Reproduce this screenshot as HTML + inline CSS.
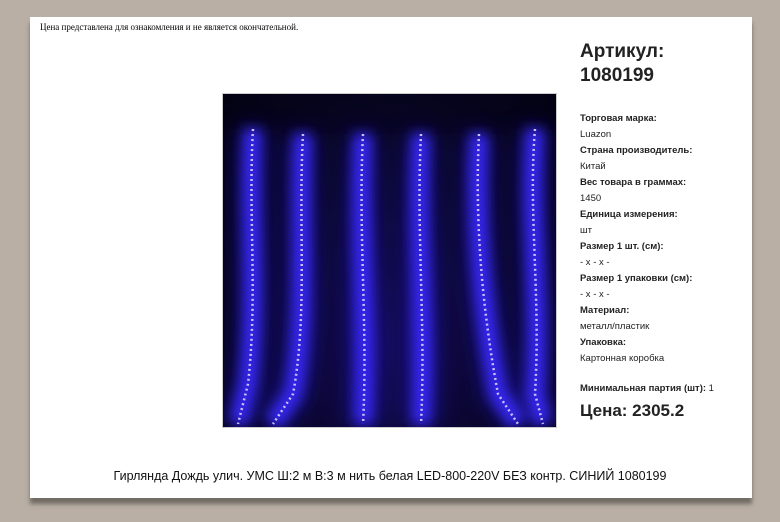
<!DOCTYPE html>
<html><head><meta charset="utf-8"><style>
body{margin:0;width:780px;height:522px;background:#b9afa5;position:relative;overflow:hidden;font-family:"Liberation Sans",Arial,sans-serif;}
.card{position:absolute;left:30px;top:17px;width:722px;height:481px;background:#fff;box-shadow:0 6px 4px rgba(90,85,80,.75);}
.note{position:absolute;left:40px;top:22px;font:9px "Liberation Serif",serif;color:#000;}
.art{position:absolute;left:580px;top:40px;font-size:19px;font-weight:bold;color:#222;line-height:24px;}
.info{position:absolute;left:580px;top:111px;font-size:9.5px;color:#222;line-height:16px;}
.info b{font-weight:bold;}
.min{position:absolute;left:580px;top:383px;font-size:9.5px;color:#222;}
.price{position:absolute;left:580px;top:401px;font-size:17px;font-weight:bold;color:#222;}
.title{position:absolute;left:0;width:780px;top:469px;text-align:center;font-size:12.5px;color:#111;}
.img{position:absolute;left:222px;top:93px;width:335px;height:335px;border:1px solid #ccc;box-sizing:border-box;background:radial-gradient(ellipse at 50% 75%,#120a50 0%,#080624 55%,#030212 100%);}
</style></head><body>
<div class="card"></div>
<div class="note">Цена представлена для ознакомления и не является окончательной.</div>
<div class="img"><svg width="333" height="333" viewBox="0 0 333 333">
<defs><filter id="g" x="-50%" y="-10%" width="200%" height="120%"><feGaussianBlur stdDeviation="6"/></filter>
<filter id="g2" x="-100%" y="-10%" width="300%" height="120%"><feGaussianBlur stdDeviation="12"/></filter></defs>
<g stroke="#2a1cff" fill="none" stroke-width="30" opacity=".35" filter="url(#g2)">
<path d="M30 35 C25 120 35 200 25 290 L15 330"/>
<path d="M80 40 C75 130 85 220 70 300 L50 330"/>
<path d="M140 40 C135 140 145 230 140 330"/>
<path d="M198 40 C193 140 203 230 198 330"/>
<path d="M256 40 C251 140 262 230 275 300 L295 330"/>
<path d="M312 35 C305 120 318 200 312 300 L320 330"/>
</g>
<g stroke="#3a2cff" fill="none" stroke-width="18" opacity=".9" filter="url(#g)">
<path d="M30 35 C25 120 35 200 25 290 L15 330"/>
<path d="M80 40 C75 130 85 220 70 300 L50 330"/>
<path d="M140 40 C135 140 145 230 140 330"/>
<path d="M198 40 C193 140 203 230 198 330"/>
<path d="M256 40 C251 140 262 230 275 300 L295 330"/>
<path d="M312 35 C305 120 318 200 312 300 L320 330"/>
</g>
<g stroke="#c8c0ff" fill="none" stroke-width="2.5" stroke-dasharray="2 3" opacity="1">
<path d="M30 35 C25 120 35 200 25 290 L15 330"/>
<path d="M80 40 C75 130 85 220 70 300 L50 330"/>
<path d="M140 40 C135 140 145 230 140 330"/>
<path d="M198 40 C193 140 203 230 198 330"/>
<path d="M256 40 C251 140 262 230 275 300 L295 330"/>
<path d="M312 35 C305 120 318 200 312 300 L320 330"/>
</g>
</svg></div>
<div class="art">Артикул:<br>1080199</div>
<div class="info"><b>Торговая марка:</b><br>Luazon<br><b>Страна производитель:</b><br>Китай<br><b>Вес товара в граммах:</b><br>1450<br><b>Единица измерения:</b><br>шт<br><b>Размер 1 шт. (см):</b><br>- x - x -<br><b>Размер 1 упаковки (см):</b><br>- x - x -<br><b>Материал:</b><br>металл/пластик<br><b>Упаковка:</b><br>Картонная коробка</div>
<div class="min"><b>Минимальная партия (шт):</b> 1</div>
<div class="price">Цена: 2305.2</div>
<div class="title">Гирлянда Дождь улич. УМС Ш:2 м В:3 м нить белая LED-800-220V БЕЗ контр. СИНИЙ 1080199</div>
</body></html>
